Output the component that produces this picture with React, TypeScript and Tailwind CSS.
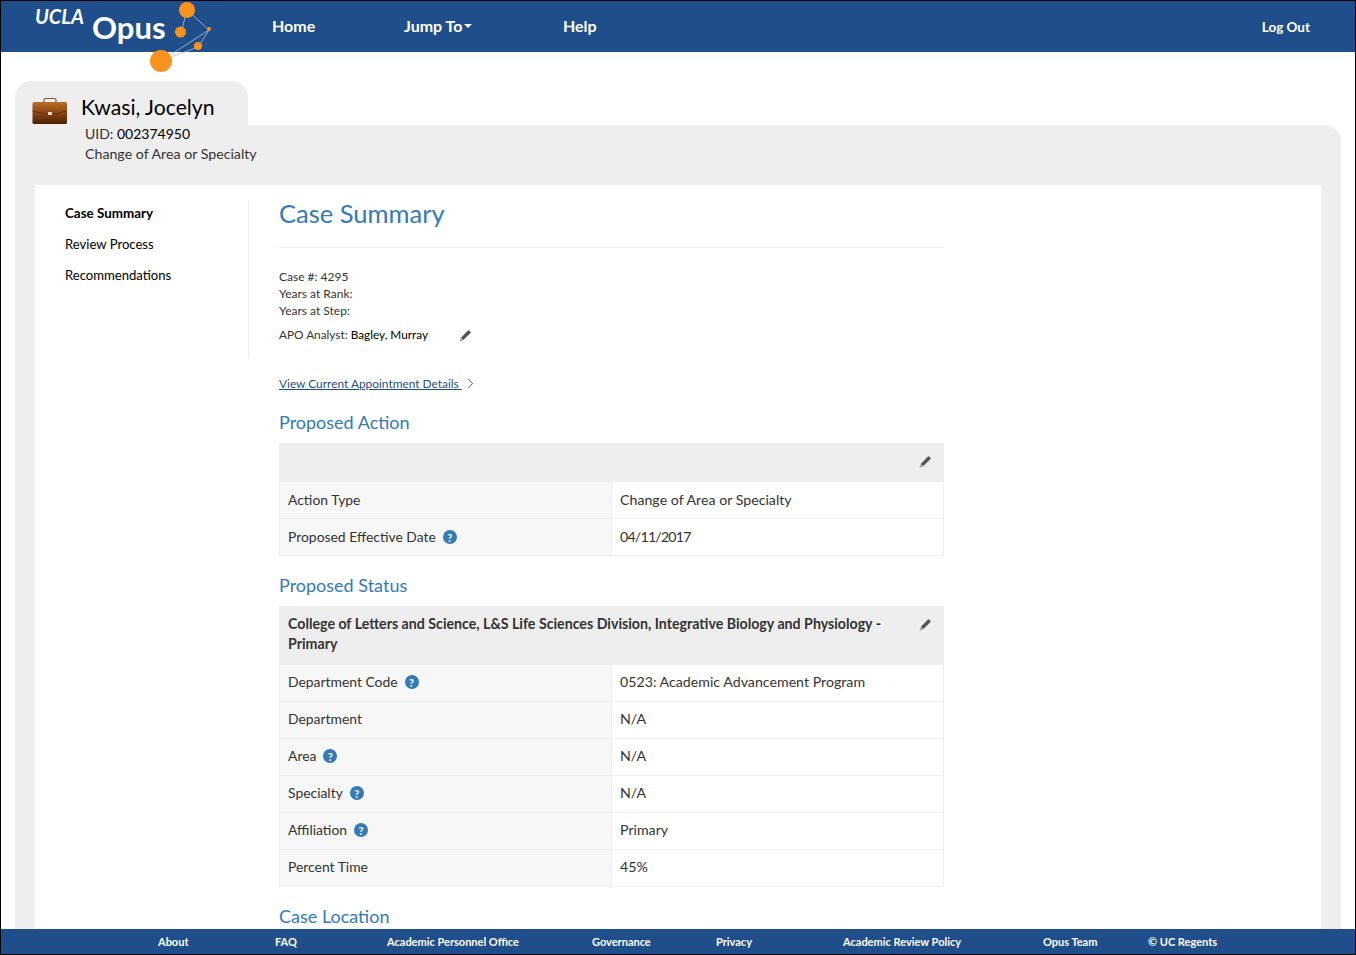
import { ChevronRight } from "lucide-react";

const navLinks = [
  { label: "Home", width: "w-[132px]" },
  { label: "Jump To", width: "w-[159px]", caret: true },
  { label: "Help", width: "w-[60px]" },
];

const footerLinks = [
  { label: "About", width: "w-[117px]" },
  { label: "FAQ", width: "w-[112px]" },
  { label: "Academic Personnel Office", width: "w-[205px]" },
  { label: "Governance", width: "w-[124px]" },
  { label: "Privacy", width: "w-[127px]" },
  { label: "Academic Review Policy", width: "w-[200px]" },
  { label: "Opus Team", width: "w-[105px]" },
  { label: "© UC Regents", width: "w-[100px]" },
];

const statusRows = [
  { label: "Department Code", value: "0523: Academic Advancement Program", help: true },
  { label: "Department", value: "N/A" },
  { label: "Area", value: "N/A", help: true },
  { label: "Specialty", value: "N/A", help: true },
  { label: "Affiliation", value: "Primary", help: true },
  { label: "Percent Time", value: "45%" },
];

const actionRows = [
  { label: "Action Type", value: "Change of Area or Specialty" },
  { label: "Proposed Effective Date", value: "04/11/2017", help: true, tight: true },
];

const Logo = () => (
  <svg className="absolute left-[145px] top-0" width="70" height="74" viewBox="0 0 70 74">
    <g stroke="#b9c3d2" strokeWidth="0.8" fill="none">
      <line x1="41" y1="9" x2="63" y2="29" />
      <line x1="41" y1="9" x2="35" y2="32" />
      <line x1="63" y1="29" x2="15" y2="60" />
      <line x1="63" y1="29" x2="52" y2="46" />
      <line x1="52" y1="46" x2="15" y2="60" />
    </g>
    <g fill="#f8931d">
      <circle cx="41" cy="9" r="8" />
      <circle cx="34.500" cy="31" r="5.500" />
      <circle cx="63" cy="28" r="2" />
      <circle cx="52" cy="45" r="4" />
      <circle cx="15" cy="60" r="11" />
    </g>
  </svg>
);

const Briefcase = () => (
  <svg className="mt-[2px]" width="36" height="28" viewBox="0 0 36 28">
    <defs>
      <linearGradient id="bag" x1="0" y1="0" x2="0" y2="1">
        <stop offset="0" stopColor="#b86f28" />
        <stop offset="0.5" stopColor="#8a4512" />
        <stop offset="1" stopColor="#4a1f02" />
      </linearGradient>
    </defs>
    <path d="M12 6V3a1.500 1.500 0 0 1 1.500-1.500h9A1.500 1.500 0 0 1 24 3v3" fill="none" stroke="#7b5a3e" strokeWidth="1.200" />
    <rect x="0.500" y="5" width="34.500" height="22" rx="1.500" fill="url(#bag)" />
    <path d="M0.500 14Q18 20 35 14" fill="none" stroke="#5a2a08" strokeWidth="0.700" />
    <rect x="16" y="15" width="4" height="3" rx="0.500" fill="#e8e2da" />
  </svg>
);

const Pencil = ({ className }: { className?: string }) => (
  <svg className={className} width="12" height="12" viewBox="0 0 12 12">
    <path d="M9 .5a.8.8 0 0 1 1.100 0l1.400 1.400a.8.800 0 0 1 0 1.100L4.200 10.300 1.700 8z" fill="#555" />
    <path d="M1.400 8.500 3.700 10.700.6 11.500z" fill="#999" />
  </svg>
);

const Help = () => (
  <span className="ml-[7px] inline-flex h-[14px] w-[14px] items-center justify-center rounded-full bg-[#337ab7] text-[11px] leading-none font-bold text-white">
    ?
  </span>
);

type Row = { label: string; value: string; help?: boolean; tight?: boolean };

const InfoTable = ({ title, rows }: { title?: string; rows: Row[] }) => (
  <div className="text-[14.200px] text-[#333]">
    <div
      className={
        title
          ? "relative h-[59px] bg-[#eee] pt-[8px] pr-[60px] pl-[9px] leading-[20px] font-bold"
          : "relative h-[39px] bg-[#eee]"
      }
    >
      {title}
      <Pencil className="absolute top-[13px] right-[13px]" />
    </div>
    <div className="border-x border-[#eee]">
      {rows.map((row) => (
        <div key={row.label} className="flex h-[37px] border-b border-[#eee]">
          <div
            className={
              title
                ? "flex w-[332px] items-center border-r border-[#eee] bg-[#f7f7f7] pb-[2px] pl-[8px] text-[13.900px]"
                : "flex w-[332px] items-center border-r border-[#eee] bg-[#f7f7f7] pl-[8px] text-[13.900px]"
            }
          >
            {row.label}
            {row.help && <Help />}
          </div>
          <div
            className={
              (title ? "flex items-center pb-[2px] pl-[8px]" : "flex items-center pl-[8px]") +
              (row.tight ? " tracking-[-0.8px]" : "")
            }
          >
            {row.value}
          </div>
        </div>
      ))}
    </div>
  </div>
);

const App = () => {
  return (
    <div
      className="relative h-[955px] overflow-hidden border border-black bg-white text-[#333]"
      style={{ fontFamily: "Lato, sans-serif" }}
    >
      <header className="relative flex h-[51px] items-center bg-[#1f4e8a] pb-[2px] pl-[271px] text-[16px] font-bold text-white">
        <span className="absolute top-0 left-[34px] text-[20px] font-bold italic">UCLA</span>
        <span className="absolute top-[4px] left-[91px] text-[31px] leading-[44px] font-bold">Opus</span>
        <Logo />
        {navLinks.map((link) => (
          <span key={link.label} className={`${link.width} flex items-center`}>
            {link.label}
            {link.caret && (
              <span className="ml-[2px] h-0 w-0 border-x-[4px] border-t-[4px] border-x-transparent border-t-white" />
            )}
          </span>
        ))}
        <span className="mt-[3px] ml-auto pr-[45px] text-[13.500px]">Log Out</span>
      </header>

      <div className="px-[14px] pt-[29px]">
        <div className="flex h-[44px] w-[233px] items-start rounded-t-2xl bg-[#eee] pt-[14px] pl-[17px]">
          <Briefcase />
          <span className="ml-[13px] text-[21.200px] leading-[24px] text-black">Kwasi, Jocelyn</span>
        </div>
        <div className="h-[830px] rounded-tr-2xl bg-[#eee] px-[20px] pt-0">
          <div className="h-[60px] -translate-y-px pl-[50px] text-[14.200px] leading-[20px]">
            <div className="text-[14px]">
              UID: <span className="text-black">002374950</span>
            </div>
            <div>Change of Area or Specialty</div>
          </div>
          <div className="flex h-[770px] bg-white">
            <nav className="mt-[15px] flex h-[158px] w-[214px] flex-col gap-[14px] border-r border-[#eee] pt-[5px] pl-[30px] text-[13.100px] leading-[17px] text-black">
              <div className="text-[13.400px] font-bold">Case Summary</div>
              <div>Review Process</div>
              <div>Recommendations</div>
            </nav>
            <main className="ml-[30px] w-[665px]">
              <h1 className="mt-[13px] h-[50px] border-b border-[#eee] text-[25.500px] leading-[30px] text-[#337ab7]">
                Case Summary
              </h1>
              <div className="mt-[20px] text-[12px] leading-[17px]">
                <div>Case #: 4295</div>
                <div>Years at Rank:</div>
                <div>Years at Step:</div>
              </div>
              <div className="mt-[7px] flex h-[17px] items-center text-[11.800px]">
                APO Analyst:&nbsp;<span className="text-black">Bagley, Murray</span>
                <Pencil className="mt-[3px] ml-[31px]" />
              </div>
              <div className="mt-[32px] flex h-[17px] items-center text-[11.900px] text-[#1f4e8a]">
                <span className="underline">View Current Appointment Details&nbsp;</span>
                <ChevronRight className="text-[#333]" size={17} strokeWidth={1.200} />
              </div>
              <h2 className="mt-[18px] mb-[9px] text-[18px] leading-[24px] text-[#337ab7]">Proposed Action</h2>
              <InfoTable rows={actionRows} />
              <h2 className="mt-[17px] mb-[9px] text-[18px] leading-[24px] text-[#337ab7]">Proposed Status</h2>
              <InfoTable
                title="College of Letters and Science, L&S Life Sciences Division, Integrative Biology and Physiology - Primary"
                rows={statusRows}
              />
              <h2 className="mt-[17px] text-[18px] leading-[24px] text-[#337ab7]">Case Location</h2>
            </main>
          </div>
        </div>
      </div>

      <footer className="absolute right-0 bottom-0 left-0 flex h-[25px] items-center bg-[#1f4e8a] pt-[2px] pl-[157px] text-[11px] font-bold text-white">
        {footerLinks.map((link) => (
          <span key={link.label} className={link.width}>
            {link.label}
          </span>
        ))}
      </footer>
    </div>
  );
};

export default App;
